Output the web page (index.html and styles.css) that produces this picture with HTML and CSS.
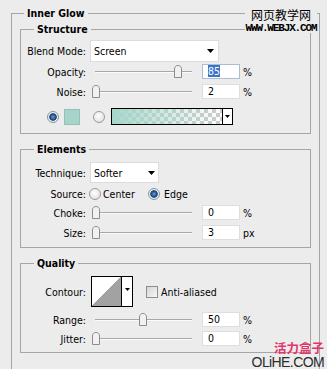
FILE: index.html
```html
<!DOCTYPE html>
<html>
<head>
<meta charset="utf-8">
<link rel="stylesheet" href="styles.css">
</head>
<body>
<fieldset class="group outer">
  <legend>Inner Glow</legend>

  <fieldset class="group sub structure">
    <legend>Structure</legend>
    <div class="row r-blend">
      <span class="lbl">Blend Mode:</span>
      <div class="select select-blend"><span>Screen</span><svg class="darr" viewBox="0 0 7 4"><path d="M0 0H7L3.5 4Z"/></svg></div>
    </div>
    <div class="row r-field mt2">
      <span class="lbl">Opacity:</span>
      <div class="slider"><svg class="thumb" style="left:82px" viewBox="0 0 8 13"><path d="M0.5 12.5V4C0.5 1.8 1.9 0.5 4 0.5S7.5 1.8 7.5 4V12.5Z"/></svg></div>
      <div class="num focus"><span class="sel">85</span></div>
      <span class="unit">%</span>
    </div>
    <div class="row r-field mt5">
      <span class="lbl">Noise:</span>
      <div class="slider"><svg class="thumb" style="left:0px" viewBox="0 0 8 13"><path d="M0.5 12.5V4C0.5 1.8 1.9 0.5 4 0.5S7.5 1.8 7.5 4V12.5Z"/></svg></div>
      <div class="num">2</div>
      <span class="unit">%</span>
    </div>
    <div class="row r-color mt9">
      <span class="radio on"></span>
      <span class="swatch"></span>
      <span class="radio radio-grad"></span>
      <div class="grad">
        <div class="grad-fill"></div>
        <div class="grad-arrow"><svg class="darr small" viewBox="0 0 5 3"><path d="M0 0H5L2.5 3Z"/></svg></div>
      </div>
    </div>
  </fieldset>

  <fieldset class="group sub elements">
    <legend>Elements</legend>
    <div class="row r-tech">
      <span class="lbl">Technique:</span>
      <div class="select select-tech"><span>Softer</span><svg class="darr" viewBox="0 0 7 4"><path d="M0 0H7L3.5 4Z"/></svg></div>
    </div>
    <div class="row r-source mt4">
      <span class="lbl">Source:</span>
      <label class="opt opt-center"><span class="radio"></span><span class="opt-text">Center</span></label>
      <label class="opt"><span class="radio on"></span><span class="opt-text edge">Edge</span></label>
    </div>
    <div class="row r-field mt4">
      <span class="lbl">Choke:</span>
      <div class="slider"><svg class="thumb" style="left:0px" viewBox="0 0 8 13"><path d="M0.5 12.5V4C0.5 1.8 1.9 0.5 4 0.5S7.5 1.8 7.5 4V12.5Z"/></svg></div>
      <div class="num">0</div>
      <span class="unit">%</span>
    </div>
    <div class="row r-field mt5">
      <span class="lbl">Size:</span>
      <div class="slider"><svg class="thumb" style="left:0px" viewBox="0 0 8 13"><path d="M0.5 12.5V4C0.5 1.8 1.9 0.5 4 0.5S7.5 1.8 7.5 4V12.5Z"/></svg></div>
      <div class="num">3</div>
      <span class="unit">px</span>
    </div>
  </fieldset>

  <fieldset class="group sub quality">
    <legend>Quality</legend>
    <div class="row r-contour">
      <span class="lbl">Contour:</span>
      <div class="contour">
        <div class="contour-preview"></div>
        <div class="contour-arrow"><svg class="darr small" viewBox="0 0 5 3"><path d="M0 0H5L2.5 3Z"/></svg></div>
      </div>
      <span class="check"></span>
      <span class="check-text">Anti-aliased</span>
    </div>
    <div class="row r-field mt5">
      <span class="lbl">Range:</span>
      <div class="slider"><svg class="thumb" style="left:47px" viewBox="0 0 8 13"><path d="M0.5 12.5V4C0.5 1.8 1.9 0.5 4 0.5S7.5 1.8 7.5 4V12.5Z"/></svg></div>
      <div class="num">50</div>
      <span class="unit">%</span>
    </div>
    <div class="row r-field mt4">
      <span class="lbl">Jitter:</span>
      <div class="slider"><svg class="thumb" style="left:0px" viewBox="0 0 8 13"><path d="M0.5 12.5V4C0.5 1.8 1.9 0.5 4 0.5S7.5 1.8 7.5 4V12.5Z"/></svg></div>
      <div class="num">0</div>
      <span class="unit">%</span>
    </div>
  </fieldset>
</fieldset>

<div class="mark-top">
  <span class="mark-cn">网页教学网</span>
  <span class="mark-url">WWW.WEBJX.COM</span>
</div>
<div class="mark-bottom">
  <span class="mb-cn">活力盒子</span>
  <span class="mb-en">OLiHE.COM</span>
</div>
</body>
</html>
```

FILE: styles.css
```css
* { box-sizing: border-box; }
html, body { margin: 0; }
html { height: 369px; overflow: hidden; }
body {
  position: relative;
  width: 327px;
  height: 369px;
  overflow: hidden;
  padding: 6px 0 0 11px;
  background: #ececec;
  color: #000;
  font-family: "DejaVu Sans Condensed", "DejaVu Sans", sans-serif;
  font-stretch: condensed;
  font-size: 10.5px;
}

.group {
  margin: 0;
  min-width: 0;
  border: 1px solid #a5a5a5;
}
.group > legend {
  padding: 0 3px;
  line-height: 14px;
  font-weight: bold;
  font-size: 10.5px;
}
.outer { width: 309px; padding: 2px 8px 16px; }
.outer > legend { margin-left: 4px; }
.sub > legend { margin-left: 13px; }
.structure { padding: 4px 0 8px; }
.elements { margin-top: 8px; padding: 6px 0 7px; }
.quality { margin-top: 8px; padding: 6px 0 6px; }

.row { display: flex; align-items: center; }
.mt2 { margin-top: 2px; }
.mt4 { margin-top: 4px; }
.mt5 { margin-top: 5px; }
.mt9 { margin-top: 9px; }
.r-blend { height: 22px; }
.r-field { height: 15px; }
.r-color { height: 17px; padding-left: 26px; }
.r-tech { height: 21px; }
.r-source { height: 14px; }
.r-contour { height: 31px; }

.lbl { width: 65px; flex: none; text-align: right; white-space: nowrap; }

.select {
  margin-left: 4px;
  height: 100%;
  flex: none;
  display: flex;
  align-items: center;
  justify-content: space-between;
  padding: 0 4px 0 3px;
  background: #fff;
  border: 1px solid #dcdcdc;
}
.select-blend { width: 129px; }
.select-tech { width: 69px; padding-right: 3px; }
.darr { width: 7px; height: 4px; fill: #000; display: block; }
.darr.small { width: 5px; height: 3px; }

.slider {
  position: relative;
  flex: none;
  width: 103px;
  height: 15px;
  margin-left: 6px;
  background:
    linear-gradient(#a8a8a8, #a8a8a8) 3px 7px / 97px 1px no-repeat,
    linear-gradient(#fbfbfb, #fbfbfb) 3px 8px / 97px 1px no-repeat;
}
.thumb {
  position: absolute;
  top: 1px;
  width: 8px;
  height: 13px;
  fill: #f1f1f1;
  stroke: #8c8c8c;
  stroke-width: 1;
}

.num {
  flex: none;
  width: 38px;
  height: 15px;
  margin-left: 7px;
  padding-left: 5px;
  line-height: 13px;
  background: #fff;
  border: 1px solid #dedede;
}
.num.focus { border-color: #a9bdd5; }
.sel { background: #3a74c6; color: #fff; }
.unit { margin-left: 3px; }

.radio {
  flex: none;
  width: 12px;
  height: 12px;
  border-radius: 50%;
  border: 1px solid #9b9b9b;
  background: radial-gradient(circle at 45% 40%, #ffffff 0, #e9e9e9 60%, #d2d2d2 100%);
}
.radio.on {
  border-color: #8094ad;
  background: radial-gradient(circle at 50% 50%, #6d9fd6 0, #2b5c98 2.2px, #1c3f6e 3.4px, #f4f4f4 4.2px, #dadada 100%);
}
.swatch {
  flex: none;
  width: 16px;
  height: 16px;
  margin-left: 5px;
  background: #a7d4ca;
  border: 1px solid #96c0b7;
}
.radio-grad { margin-left: 13px; }
.grad {
  flex: none;
  display: flex;
  width: 122px;
  height: 17px;
  margin-left: 6px;
  border: 1px solid #000;
}
.grad-fill {
  flex: 1;
  background:
    linear-gradient(to right, rgba(166, 214, 202, 1), rgba(166, 214, 202, 0)),
    repeating-conic-gradient(#cccccc 0 25%, #ffffff 0 50%) 0 0 / 8px 8px;
}
.grad-arrow {
  width: 10px;
  display: flex;
  align-items: center;
  justify-content: center;
  background: #fff;
  border-left: 1px solid #000;
}

.opt { display: flex; align-items: center; }
.r-source .opt:first-of-type { margin-left: 3px; }
.opt-center { width: 59px; }
.opt-text { margin-left: 2px; }
.opt-text.edge { margin-left: 4px; }

.contour {
  flex: none;
  display: flex;
  width: 42px;
  height: 31px;
  margin-left: 5px;
  border: 1px solid #000;
}
.contour-preview {
  width: 29px;
  background: linear-gradient(to bottom right, #ffffff 50%, #a2a2a2 50%);
}
.contour-arrow {
  flex: 1;
  display: flex;
  align-items: center;
  justify-content: center;
  padding-bottom: 4px;
  background: #fff;
  border-left: 1px solid #000;
}
.check {
  flex: none;
  width: 12px;
  height: 12px;
  margin-left: 13px;
  border: 1px solid #8e8e8e;
  background: linear-gradient(135deg, #d4d4d4, #f8f8f8);
}
.check-text { margin-left: 3px; }

.mark-top {
  position: absolute;
  left: 245px;
  top: 8px;
  width: 72px;
  height: 25px;
  padding-top: 1px;
  background: #ececec;
  text-align: center;
}
.mark-cn {
  display: block;
  font-family: "Noto Sans CJK SC", sans-serif;
  font-size: 12px;
  line-height: 12px;
  color: #000;
}
.mark-url {
  display: block;
  margin-top: 2px;
  font-family: "Liberation Mono", monospace;
  font-weight: bold;
  font-size: 11px;
  letter-spacing: -1.15px;
  line-height: 10px;
  color: #000;
}
.mark-bottom {
  position: absolute;
  right: 3px;
  top: 342px;
  text-align: right;
}
.mb-cn {
  display: block;
  font-family: "Noto Sans CJK SC", sans-serif;
  font-weight: bold;
  font-size: 12.5px;
  line-height: 12px;
  color: #e2356b;
}
.mb-en {
  display: block;
  margin-top: 2px;
  font-family: "Liberation Sans", sans-serif;
  font-size: 14px;
  letter-spacing: -0.6px;
  line-height: 13px;
  color: #2b2b2b;
}
```
